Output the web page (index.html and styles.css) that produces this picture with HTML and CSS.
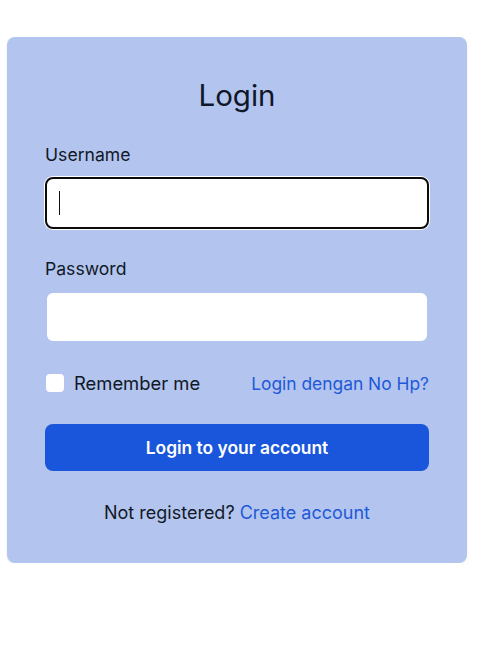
FILE: index.html
```html
<!DOCTYPE html>
<html lang="id">
<head>
<meta charset="utf-8">
<title>Login</title>
<link rel="stylesheet" href="styles.css">
</head>
<body>
<main class="page">
  <form class="card">
    <h1 class="title">Login</h1>
    <div class="field">
      <label class="label" for="username">Username</label>
      <div class="input-wrap">
        <input class="input input-focused" id="username" type="text">
        <span class="caret"></span>
      </div>
    </div>
    <div class="field">
      <label class="label" for="password">Password</label>
      <input class="input" id="password" type="password">
    </div>
    <div class="options">
      <label class="remember">
        <span class="checkbox"></span>
        <span>Remember me</span>
      </label>
      <a class="link" href="#">Login dengan No Hp?</a>
    </div>
    <button class="btn" type="button">Login to your account</button>
    <p class="footer">Not registered? <a class="link" href="#">Create account</a></p>
  </form>
</main>
</body>
</html>
```

FILE: styles.css
```css
* { box-sizing: border-box; }
html, body { margin: 0; padding: 0; background: #ffffff; }
body {
  font-family: "Inter", "Open Sans", sans-serif;
  color: #111827;
}
.page {
  padding: 37px 0 0 7px;
}
.card {
  width: 460px;
  height: 526px;
  background: #b3c5ee;
  border-radius: 8px;
  box-shadow: 0 1px 3px rgba(0,0,0,0.08);
  padding: 40px 38px;
  display: flex;
  flex-direction: column;
}
.title {
  margin: 0;
  height: 36px;
  line-height: 36px;
  font-size: 29.5px;
  font-weight: 400;
  text-align: center;
  color: #0f172a;
}
.field {
  display: flex;
  flex-direction: column;
  gap: 12px;
  margin-top: 32px;
}
.field + .field { margin-top: 30px; }
.label {
  font-size: 17.6px;
  line-height: 20px;
  height: 20px;
  color: #111827;
}
.input-wrap { position: relative; }
.input {
  display: block;
  width: 384px;
  height: 52px;
  border: 2px solid #b3c5ee;
  border-radius: 8px;
  background: #ffffff;
  outline: none;
  padding: 0 12px;
  font: inherit;
}
.input-focused {
  border-color: #0b0b0b;
  box-shadow: 0 0 0 1px #ffffff;
}
.caret {
  position: absolute;
  left: 14px;
  top: 14px;
  width: 1px;
  height: 24px;
  background: #111;
}
.options {
  margin-top: 30px;
  height: 20px;
  display: flex;
  align-items: center;
  justify-content: space-between;
}
.remember {
  display: flex;
  align-items: center;
  gap: 10px;
  font-size: 18.4px;
  color: #111827;
}
.checkbox {
  width: 18px;
  height: 18px;
  background: #ffffff;
  border-radius: 4px;
  margin-left: 1px;
}
.link {
  color: #2159d8;
  text-decoration: none;
  font-size: 17.4px;
}
.btn {
  margin-top: 31px;
  height: 47px;
  width: 384px;
  border: none;
  border-radius: 8px;
  background: #1a56db;
  color: #ffffff;
  font: inherit;
  font-size: 17.4px;
  font-weight: 600;
}
.footer {
  margin: 32px 0 0;
  height: 20px;
  line-height: 20px;
  text-align: center;
  font-size: 18px;
  color: #111827;
}
.footer .link { font-size: inherit; }
```
